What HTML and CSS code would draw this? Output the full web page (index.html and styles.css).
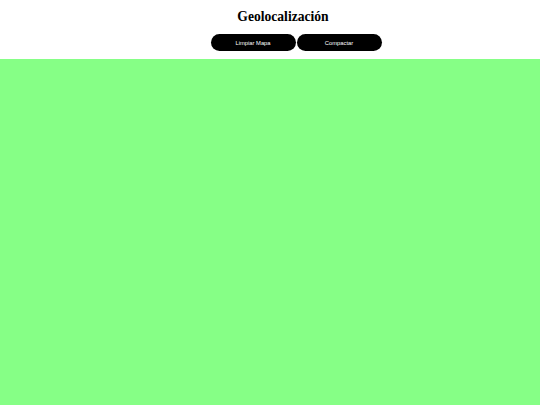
FILE: index.html
```html
<!DOCTYPE html>
<html lang="es">
<head>
<meta charset="utf-8">
<title>Geolocalización</title>
<link rel="stylesheet" href="styles.css">
</head>
<body>
<header class="top">
  <h1 class="title">Geolocalización</h1>
  <div class="actions">
    <button class="btn" type="button">Limpiar Mapa</button>
    <button class="btn" type="button">Compactar</button>
  </div>
</header>
<main class="map"></main>
</body>
</html>
```
FILE: styles.css
```css
html, body {
  margin: 0;
  padding: 0;
  height: 100%;
}
body {
  display: flex;
  flex-direction: column;
  background: #ffffff;
  font-family: "Liberation Sans", Arial, sans-serif;
}
.top {
  background: #ffffff;
  padding: 9px 0 8px;
  height: 42px;
}
.title {
  margin: 0;
  padding-left: 26px;
  text-align: center;
  font-family: "Liberation Serif", "Times New Roman", serif;
  font-weight: bold;
  font-size: 13.6px;
  line-height: 16px;
  color: #000;
}
.actions {
  margin-top: 9px;
  padding-left: 52px;
  display: flex;
  justify-content: center;
  gap: 1px;
}
.btn {
  width: 85px;
  height: 17px;
  border: none;
  border-radius: 9px;
  background: #000;
  color: #fff;
  font-family: "Liberation Sans", Arial, sans-serif;
  font-size: 5.8px;
  padding: 0;
  cursor: pointer;
}
.map {
  flex: 1;
  background: #86ff86;
}
```
